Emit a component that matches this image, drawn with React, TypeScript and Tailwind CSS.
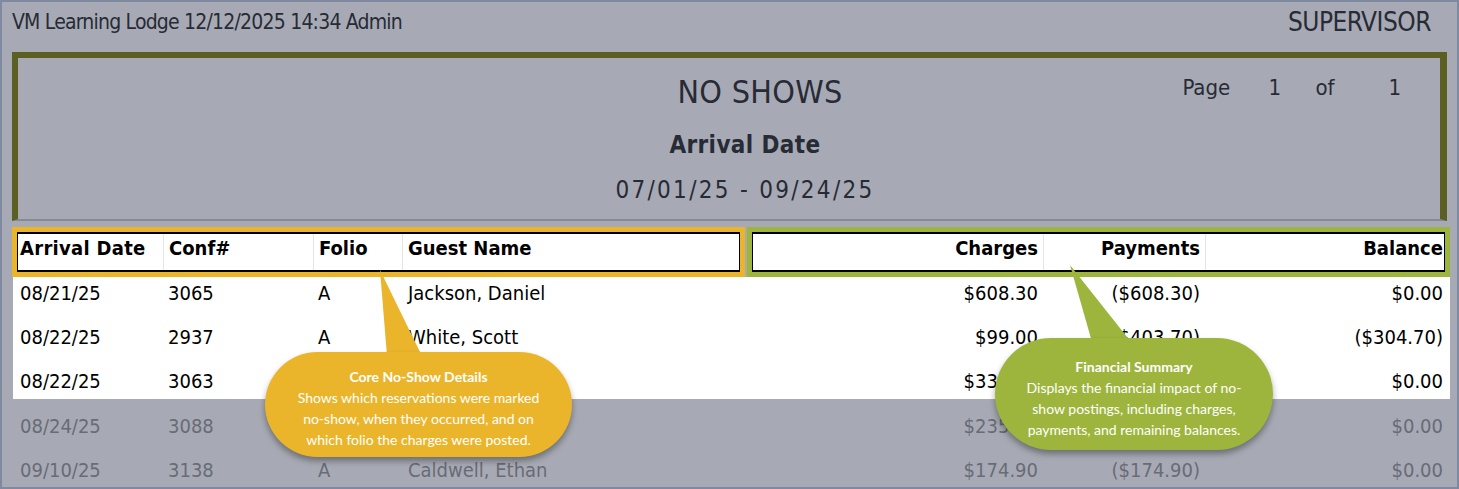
import React from 'react';

// Report rows: the first three are highlighted, the last two sit under the dim overlay
const ROWS = [
  { date: '08/21/25', conf: '3065', folio: 'A', guest: 'Jackson, Daniel', charges: '$608.30', payments: '($608.30)', balance: '$0.00' },
  { date: '08/22/25', conf: '2937', folio: 'A', guest: 'White, Scott', charges: '$99.00', payments: '($403.70)', balance: '($304.70)' },
  { date: '08/22/25', conf: '3063', folio: 'A', guest: 'Miller, Chloe', charges: '$335.00', payments: '($335.00)', balance: '$0.00' },
  { date: '08/24/25', conf: '3088', folio: 'A', guest: 'Ramos, Olivia', charges: '$235.40', payments: '($235.40)', balance: '$0.00' },
  { date: '09/10/25', conf: '3138', folio: 'A', guest: 'Caldwell, Ethan', charges: '$174.90', payments: '($174.90)', balance: '$0.00' },
];

const REPORT_FONT = "font-['DejaVu_Sans_Condensed','DejaVu_Sans',sans-serif]";

function DataRow({ row, dim, height, top }: { row: (typeof ROWS)[number]; dim?: boolean; height: string; top: string }) {
  return (
    <div className={`flex items-start ${height} ${top} text-[20px] leading-[24px] ${dim ? 'text-[#686c76]' : 'text-black'}`}>
      <div className="w-[155px] pl-[7px]">{row.date}</div>
      <div className="w-[150px]">{row.conf}</div>
      <div className="w-[90px]">{row.folio}</div>
      <div className="w-[337px]">{row.guest}</div>
      <div className="w-[293px] text-right">{row.charges}</div>
      <div className="w-[162px] text-right">{row.payments}</div>
      <div className="w-[243px] text-right">{row.balance}</div>
    </div>
  );
}

function Callout({
  className,
  tail,
  color,
  title,
  lines,
}: {
  className: string;
  tail: string;
  color: string;
  title: string;
  lines: string[];
}) {
  return (
    <div className={`absolute ${className}`}>
      <div className="relative w-full h-full">
        <svg className="absolute left-0 top-0 overflow-visible" width="1" height="1">
          <polygon points={tail} fill={color} />
        </svg>
        <div
          className="relative w-full h-full pt-[7px] rounded-[56px] flex flex-col items-center justify-center text-white text-center font-['Lato',sans-serif] text-[14px] leading-[21px] shadow-[0_4px_6px_rgba(0,0,0,0.35)]"
          style={{ backgroundColor: color }}
        >
          <div className="font-bold">{title}</div>
          {lines.map((l) => (
            <div key={l}>{l}</div>
          ))}
        </div>
      </div>
    </div>
  );
}

export default function App() {
  return (
    <div className={`relative w-[1459px] h-[489px] overflow-hidden bg-[#a7aab4] border-2 border-[#7f8aa0] ${REPORT_FONT} text-[#272b36]`}>
      {/* Top line */}
      <div className="flex justify-between items-start h-[50px] pl-[10px] pr-[26px]">
        <span className="pt-[7px] text-[21px] leading-[26px] tracking-[-0.8px]">VM Learning Lodge 12/12/2025 14:34 Admin</span>
        <span className="pt-[5px] text-[26px] leading-[30px] tracking-[-0.5px]">SUPERVISOR</span>
      </div>

      {/* Report title box */}
      <div className="mx-[10px] h-[169px] border-t-[6px] border-l-[6px] border-r-[7px] border-b-2 border-t-[#5b5f22] border-l-[#5b5f22] border-r-[#5b5f22] border-b-[#878a92] grid grid-cols-[1fr_auto_1fr]">
        <div />
        <div className="flex flex-col items-center pl-[32px] pt-[15px]">
          <div className="text-[32px] leading-[38px] ml-[30px] tracking-[0.3px]">NO SHOWS</div>
          <div className="mt-[19px] text-[24px] leading-[30px] font-bold tracking-[0.4px]">Arrival Date</div>
          <div className="mt-[15px] text-[24px] leading-[30px] tracking-[2.3px]">07/01/25 - 09/24/25</div>
        </div>
        <div className="flex justify-end pt-[16px] pr-[39px] text-[22px] leading-[28px]">
          <span className="w-[86px]">Page</span>
          <span className="w-[47px]">1</span>
          <span className="w-[73px]">of</span>
          <span>1</span>
        </div>
      </div>

      {/* Column headers, split into the two highlighted groups */}
      <div className="flex mt-[6px] ml-[10px] h-[50px] text-[20px] leading-[24px] font-bold text-black">
        <div className="w-[733px] border-[5px] border-[#ebb52b]">
          <div className="h-full flex bg-white border-y-2 border-x border-black">
            <div className="w-[145px] pl-[2px] pt-[2px] tracking-[0.3px]">Arrival Date</div>
            <div className="w-[150px] pl-[5px] pt-[2px] border-l border-[#e4e4e4]">Conf#</div>
            <div className="w-[89px] pl-[5px] pt-[2px] border-l border-[#e4e4e4]">Folio</div>
            <div className="flex-1 pl-[5px] pt-[2px] border-l border-[#e4e4e4]">Guest Name</div>
          </div>
        </div>
        <div className="w-[2px]" />
        <div className="w-[703px] border-[5px] border-[#9db53d]">
          <div className="h-full flex bg-white border-y-2 border-x border-black">
            <div className="w-[290px] pr-[5px] pt-[2px] text-right">Charges</div>
            <div className="w-[162px] pr-[5px] pt-[2px] text-right border-l border-[#e4e4e4]">Payments</div>
            <div className="flex-1 pr-[1px] pt-[2px] text-right border-l border-[#e4e4e4]">Balance</div>
          </div>
        </div>
      </div>

      {/* Data rows */}
      <div className="ml-[11px] w-[1437px] bg-white">
        <DataRow row={ROWS[0]} height="h-[44px]" top="pt-[4px]" />
        <DataRow row={ROWS[1]} height="h-[44px]" top="pt-[4px]" />
        <DataRow row={ROWS[2]} height="h-[34px]" top="pt-[4px]" />
      </div>
      <div className="ml-[11px] w-[1437px]">
        <DataRow row={ROWS[3]} dim height="h-[44px]" top="pt-[15px]" />
        <DataRow row={ROWS[4]} dim height="h-[44px]" top="pt-[15px]" />
      </div>

      {/* Annotation callouts */}
      <Callout
        className="left-[263px] top-[350px] w-[307px] h-[105px]"
        tail="115,-82 122,4 157,4"
        color="#ebb52b"
        title="Core No-Show Details"
        lines={['Shows which reservations were marked', 'no-show, when they occurred, and on', 'which folio the charges were posted.']}
      />
      <Callout
        className="left-[993px] top-[336px] w-[278px] h-[112px]"
        tail="75,-73 97,4 136,4"
        color="#9db53d"
        title="Financial Summary"
        lines={['Displays the financial impact of no-', 'show postings, including charges,', 'payments, and remaining balances.']}
      />
    </div>
  );
}
